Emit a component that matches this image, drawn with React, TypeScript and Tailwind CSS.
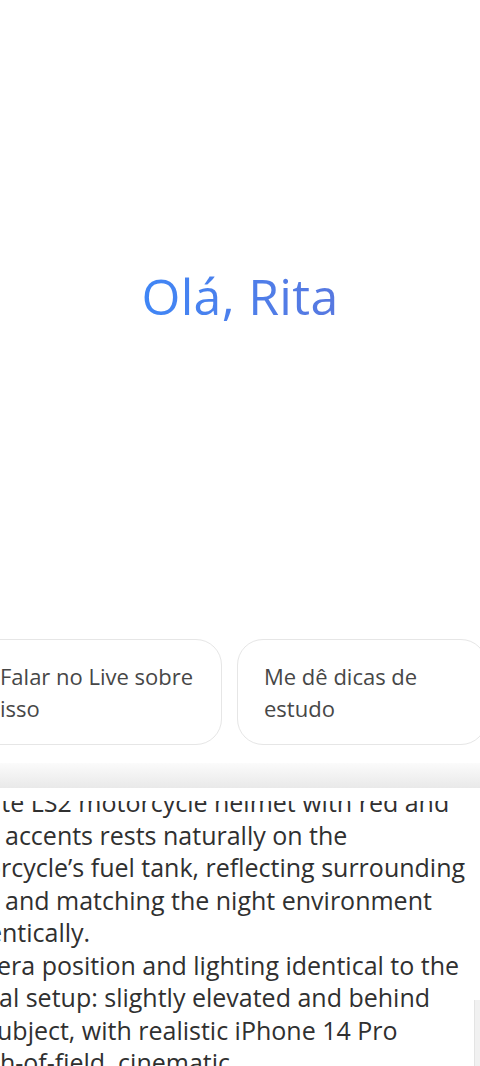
import React from "react";

const lines: { t: string; ml: string }[] = [
  { t: "ite LS2 motorcycle helmet with red and", ml: "ml-[-5px]" },
  { t: "accents rests naturally on the", ml: "ml-[5px]" },
  { t: "orcycle’s fuel tank, reflecting surrounding", ml: "ml-[-14px]" },
  { t: "and matching the night environment", ml: "ml-[5px]" },
  { t: "entically.", ml: "ml-[-12px]" },
  { t: "era position and lighting identical to the", ml: "ml-[-3px]" },
  { t: "al setup: slightly elevated and behind", ml: "ml-[-1px]" },
  { t: "ubject, with realistic iPhone 14 Pro", ml: "ml-[-3px]" },
  { t: "th-of-field, cinematic", ml: "ml-[-9px]" },
];

export default function App() {
  return (
    <div
      className="w-[480px] h-[1066px] overflow-hidden bg-white flex flex-col"
      style={{ fontFamily: '"Open Sans", Roboto, sans-serif' }}
    >
      {/* Greeting area */}
      <div className="h-[639px] shrink-0 flex justify-center pt-[265px]">
        <h1 className="text-[50px] leading-[62px] font-medium tracking-[0.3px] bg-gradient-to-r from-[#3f86f6] to-[#5778e0] bg-clip-text text-transparent">
          Olá, Rita
        </h1>
      </div>

      {/* Suggestion chips */}
      <div className="h-[106px] shrink-0 flex gap-[15px] ml-[-28px]">
        <div className="w-[250px] shrink-0 h-full rounded-[26px] border border-[#e6e6e6] px-[27px] pt-[20px] text-[22px] leading-[32px] text-[#474747]">
          Falar no Live sobre isso
        </div>
        <div className="w-[250px] shrink-0 h-full rounded-[26px] border border-[#e6e6e6] px-[26px] pt-[20px] text-[22px] leading-[32px] text-[#474747]">
          Me dê dicas de estudo
        </div>
      </div>

      <div className="h-[18px] shrink-0" />

      {/* shadow band */}
      <div className="h-[25px] shrink-0 bg-gradient-to-b from-[#fbfbfb] to-[#e9e9e9]" />
      <div className="h-[13px] shrink-0 bg-white" />

      {/* Text area */}
      <div className="relative flex-1 overflow-hidden bg-white">
        <div className="mt-[-15px] text-[25px] leading-[32.5px] text-[#303030] whitespace-pre">
          {lines.map((l, i) => (
            <div key={i} className={l.ml}>
              {l.t}
            </div>
          ))}
        </div>
        <div className="absolute right-0 top-[199px] w-[6px] h-[80px] bg-[#f1f1f1] border-l border-[#e4e4e4]" />
      </div>
    </div>
  );
}
